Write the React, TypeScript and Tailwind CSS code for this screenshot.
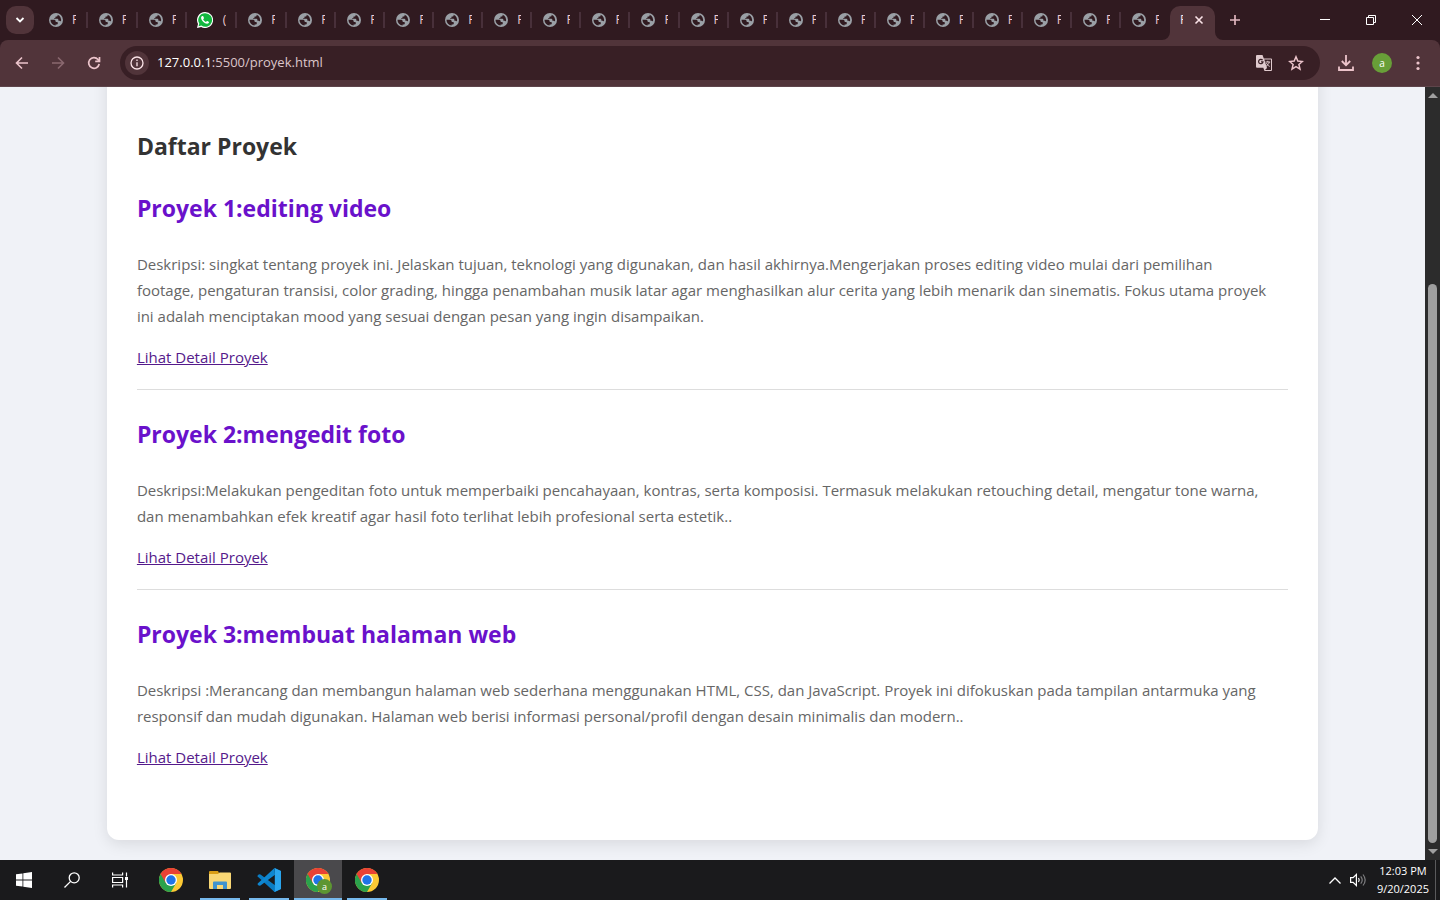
import React from "react";

const visibleTabs = Array.from({ length: 23 }, (_, i) => (i === 3 ? "(" : "P"));

const projects = [
  {
    title: "Proyek 1:editing video",
    lines: [
      "Deskripsi: singkat tentang proyek ini. Jelaskan tujuan, teknologi yang digunakan, dan hasil akhirnya.Mengerjakan proses editing video mulai dari pemilihan",
      "footage, pengaturan transisi, color grading, hingga penambahan musik latar agar menghasilkan alur cerita yang lebih menarik dan sinematis. Fokus utama proyek",
      "ini adalah menciptakan mood yang sesuai dengan pesan yang ingin disampaikan.",
    ],
  },
  {
    title: "Proyek 2:mengedit foto",
    lines: [
      "Deskripsi:Melakukan pengeditan foto untuk memperbaiki pencahayaan, kontras, serta komposisi. Termasuk melakukan retouching detail, mengatur tone warna,",
      "dan menambahkan efek kreatif agar hasil foto terlihat lebih profesional serta estetik..",
    ],
  },
  {
    title: "Proyek 3:membuat halaman web",
    lines: [
      "Deskripsi :Merancang dan membangun halaman web sederhana menggunakan HTML, CSS, dan JavaScript. Proyek ini difokuskan pada tampilan antarmuka yang",
      "responsif dan mudah digunakan. Halaman web berisi informasi personal/profil dengan desain minimalis dan modern..",
    ],
  },
];

function Globe() {
  return (
    <svg viewBox="0 0 14 14" className="h-[14px] w-[14px] shrink-0" aria-hidden="true">
      <circle cx="7" cy="7" r="7" fill="#9aa0a6" />
      <path
        d="M1.500 6.700h3.300c1.200 0 1.900.7 1.900 1.700v.7h1c.8 0 1.100.4 1.100 1v.5c0 .6-.4.9-1 .9H6.600v1.100A5.600 5.600 0 0 1 1.500 7Z"
        fill="#301a20"
      />
      <path
        d="M8.600 1.700v.8c0 .7-.5 1.100-1.100 1.100h-.9v.6c0 .5-.4.7-.8.7h-.6v.8h2.700c1 0 1.500.5 1.500 1.300v.8h1.100c.7 0 1.100.4 1.300.8A5.600 5.600 0 0 0 8.600 1.700Z"
        fill="#301a20"
      />
    </svg>
  );
}

function WhatsApp() {
  return (
    <svg viewBox="0 0 16 16" className="-ml-px h-4 w-4 shrink-0" aria-hidden="true">
      <path d="M8 0a8 8 0 0 0-7 11.900L0 16l4.200-1A8 8 0 1 0 8 0Z" fill="#fff" />
      <path d="M8.100 1.200a6.800 6.800 0 0 0-5.800 10.400l-.7 2.700 2.800-.7A6.800 6.800 0 1 0 8.100 1.200Z" fill="#12b83f" />
      <path
        d="M5.400 4c-.6 0-1.300.8-1.300 1.800 0 2.600 3.400 6 6 6 1.100 0 1.900-.8 1.900-1.700 0-.4-1.700-1.100-2-1.100-.3 0-.8 1-1.100 1C8 9.900 6.200 8.100 6.200 7.300c0-.3.8-.8.8-1.100C7 5.800 6.300 4 5.900 4Z"
        fill="#fff"
      />
    </svg>
  );
}

function Chrome() {
  return (
    <svg viewBox="0 0 24 24" className="h-6 w-6" aria-hidden="true">
      <circle cx="12" cy="12" r="12" fill="#fcc934" />
      <path d="M17.200 15 12 24A12 12 0 0 1 1.600 6L12 12Z" fill="#2ba24c" />
      <path d="M1.600 6A12 12 0 0 1 22.400 6H12L6.800 15Z" fill="#e94235" />
      <circle cx="12" cy="12" r="6" fill="#fff" />
      <circle cx="12" cy="12" r="4.700" fill="#1f74e8" />
    </svg>
  );
}

function Folder() {
  return (
    <svg viewBox="0 0 22 18" className="h-[18px] w-[22px]" aria-hidden="true">
      <path d="M0 1a1 1 0 0 1 1-1h8l1 2h11a1 1 0 0 1 1 1v5H0Z" fill="#d99e16" />
      <path d="M0 3h9l1.500-1.500H21a1 1 0 0 1 1 1V17a1 1 0 0 1-1 1H1a1 1 0 0 1-1-1Z" fill="#f8d775" />
      <path d="M4 18v-6.500a1 1 0 0 1 1-1h12a1 1 0 0 1 1 1V18h-4v-4H8v4Z" fill="#3f93cf" />
    </svg>
  );
}

function VsCode() {
  return (
    <svg viewBox="0 0 24 24" className="h-6 w-6" aria-hidden="true">
      <path d="M17.500 0 24 3v18l-6.500 3L2 9.700.5 8.500.6 7.600 2 6.300l1.500.1L18 17.300Z" fill="#0a7cc4" />
      <path d="M17.500 24 18 6.700 3.500 17.600l-1.500.1-1.400-1.300.1-1L17.500 0l.5 6.700V24Z" fill="#0e86d0" />
      <path d="M17.500 0 24 3v18l-6.500 3 .5-1V1Z" fill="#2aa5ee" />
    </svg>
  );
}

function TabStrip() {
  return (
    <div className="flex h-10 bg-[#301a20]">
      <div className="flex min-w-0 flex-1">
        <button
          type="button"
          aria-label="Search tabs"
          className="mr-1 ml-[6px] flex h-7 w-7 shrink-0 items-center justify-center self-center rounded-[10px] bg-[#51343a]"
        >
          <svg viewBox="0 0 10 10" className="h-[10px] w-[10px]" fill="none" stroke="#fff" strokeWidth="1.800">
            <path d="m1.500 3 3.500 3.500L8.500 3" />
          </svg>
        </button>
        <div className="flex min-w-0 flex-1">
          {visibleTabs.map((label, i) => (
            <button
              key={i}
              type="button"
              className={
                i < 5
                  ? "flex min-w-0 grow-[50] basis-0 items-center pl-[11px] text-[12px] text-[#eccbd1]"
                  : "flex min-w-0 grow-[49] basis-0 items-center pl-[11px] text-[12px] text-[#eccbd1]"
              }
            >
              {i === 3 ? <WhatsApp /> : <Globe />}
              <span className="ml-[9px] w-[4px] shrink-0 overflow-hidden">{label}</span>
              {i < visibleTabs.length - 1 && <span className="ml-auto h-4 w-[2px] shrink-0 bg-[#48303a]" />}
            </button>
          ))}
        </div>
        <div className="flex shrink-0 items-end">
          <svg viewBox="0 0 8 8" className="-ml-2 h-2 w-2" aria-hidden="true">
            <path d="M8 0v8H0a8 8 0 0 0 8-8Z" fill="#51343a" />
          </svg>
          <div className="flex h-[34px] w-[45px] items-center rounded-t-[10px] bg-[#51343a] pb-[6px] pl-[10px] text-[12px] text-[#fbe4e8]">
            <span className="w-[3px] overflow-hidden">P</span>
            <button type="button" aria-label="Close tab" className="ml-[11px]">
              <svg viewBox="0 0 10 10" className="h-[10px] w-[10px]" stroke="#fbe4e8" strokeWidth="1.600">
                <path d="m1.500 1.500 7 7m0-7-7 7" />
              </svg>
            </button>
          </div>
          <svg viewBox="0 0 8 8" className="h-2 w-2" aria-hidden="true">
            <path d="M0 0v8h8a8 8 0 0 1-8-8Z" fill="#51343a" />
          </svg>
          <button type="button" aria-label="New tab" className="ml-[6px] self-center">
            <svg viewBox="0 0 12 12" className="h-3 w-3" stroke="#e0b6be" strokeWidth="1.700">
              <path d="M6 1v10M1 6h10" />
            </svg>
          </button>
        </div>
      </div>
      <div className="ml-[61px] flex shrink-0">
        <button type="button" aria-label="Minimize" className="flex w-[46px] items-center justify-center">
          <svg viewBox="0 0 10 10" className="h-[10px] w-[10px]" stroke="#fff"><path d="M0 4.500h10" /></svg>
        </button>
        <button type="button" aria-label="Restore" className="flex w-[46px] items-center justify-center">
          <svg viewBox="0 0 10 10" className="h-[10px] w-[10px]" fill="none" stroke="#fff">
            <path d="M.5 2.500h7v7h-7zM2.500 2.500v-2h7v7h-2" />
          </svg>
        </button>
        <button type="button" aria-label="Close" className="flex w-[46px] items-center justify-center">
          <svg viewBox="0 0 10 10" className="h-[10px] w-[10px]" stroke="#fff"><path d="m0 0 10 10M10 0 0 10" /></svg>
        </button>
      </div>
    </div>
  );
}

function Toolbar() {
  return (
    <div className="bg-[#301a20]">
      <div className="flex h-[47px] items-center rounded-t-lg border-b border-[#5e454b] bg-[#51343a]">
        <div className="flex w-[120px] shrink-0 items-center pl-1">
          <button type="button" aria-label="Back" className="flex w-9 justify-center">
            <svg viewBox="0 0 16 16" className="h-4 w-4" fill="none" stroke="#ecc4cb" strokeWidth="1.600">
              <path d="M14 8H3M8 2.500 2.500 8 8 13.500" />
            </svg>
          </button>
          <button type="button" aria-label="Forward" disabled className="flex w-9 justify-center">
            <svg viewBox="0 0 16 16" className="h-4 w-4" fill="none" stroke="#8a686f" strokeWidth="1.600">
              <path d="M2 8h11M8 2.500 13.500 8 8 13.500" />
            </svg>
          </button>
          <button type="button" aria-label="Reload" className="flex w-9 justify-center">
            <svg viewBox="0 0 16 16" className="h-4 w-4" fill="none" stroke="#ecc4cb" strokeWidth="1.700">
              <path d="M13.200 9A5.300 5.300 0 1 1 12 4.500l1.200 1.300M13.500 2v4.300H9.200" />
            </svg>
          </button>
        </div>
        <div className="flex h-[34px] min-w-0 flex-1 items-center rounded-full bg-[#381f25] pr-4 pl-[5px]">
          <button type="button" aria-label="Site information" className="flex h-6 w-6 shrink-0 items-center justify-center rounded-full bg-[#51343a]">
            <svg viewBox="0 0 14 14" className="h-[14px] w-[14px]" fill="none" stroke="#fbe4e8" strokeWidth="1.300">
              <circle cx="7" cy="7" r="6" />
              <path d="M7 6.300v4M7 3.600v1.500" />
            </svg>
          </button>
          <div className="ml-2 min-w-0 flex-1 text-[13px] text-[#dcc5ca]">
            <span className="text-white">127.0.0.1</span>:5500/proyek.html
          </div>
          <button type="button" aria-label="Translate this page">
            <svg viewBox="0 0 16 16" className="h-4 w-4" aria-hidden="true">
              <path d="M1 0h5.500l1.300 3.500h7.200a1 1 0 0 1 1 1V15a1 1 0 0 1-1 1H8.500l-1.200-3.300H1a1 1 0 0 1-1-1V1a1 1 0 0 1 1-1Z" fill="#e0cace" />
              <path d="M8.300 4.600 11 13l-2 2h6V4.600Z" fill="#381f25" />
              <path d="M9.500 7h4.700M11.800 5.800V7m1.500 0c-.4 2-2 3.500-3.300 4.300M10.500 8c.5 1.500 1.700 2.700 3.200 3.400" fill="none" stroke="#e0cace" />
              <path d="M6.600 5.200A2.200 2.200 0 1 0 7 6.800H5" fill="none" stroke="#381f25" strokeWidth="1.200" />
            </svg>
          </button>
          <button type="button" aria-label="Bookmark this tab" className="ml-4">
            <svg viewBox="0 0 16 16" className="h-4 w-4" fill="none" stroke="#ecc4cb" strokeWidth="1.500">
              <path d="m8 1.800 1.800 4.300 4.600.4-3.500 3 1.100 4.600L8 11.700l-4 2.400 1.100-4.600-3.500-3 4.600-.4Z" />
            </svg>
          </button>
        </div>
        <div className="flex shrink-0 items-center pr-[18px] pl-[18px]">
          <button type="button" aria-label="Downloads">
            <svg viewBox="0 0 16 16" className="h-4 w-4" fill="none" stroke="#ecc4cb" strokeWidth="1.800">
              <path d="M8 0v9.500M3.800 6 8 10.200 12.200 6M1 11.500V15h14v-3.500" />
            </svg>
          </button>
          <button type="button" aria-label="Profile" className="ml-[18px] flex h-5 w-5 items-center justify-center rounded-full bg-[#689f38] text-[10px] leading-5 text-white">
            a
          </button>
          <button type="button" aria-label="Menu" className="ml-[22px]">
            <svg viewBox="0 0 8 16" className="h-4 w-2" fill="#ecc4cb">
              <circle cx="4" cy="2.500" r="1.600" />
              <circle cx="4" cy="8" r="1.600" />
              <circle cx="4" cy="13.500" r="1.600" />
            </svg>
          </button>
        </div>
      </div>
    </div>
  );
}

function ScrollBar() {
  return (
    <div className="flex w-[15px] shrink-0 flex-col items-center bg-[#2c2c2c] py-[6px]" aria-hidden="true">
      <svg viewBox="0 0 10 5" className="h-[5px] w-[10px]" fill="#9f9f9f"><path d="m0 5 5-5 5 5Z" /></svg>
      <div className="grow-[186]" />
      <div className="w-[9px] grow-[558] rounded-full bg-[#9f9f9f]" />
      <div className="h-[6px]" />
      <svg viewBox="0 0 10 5" className="h-[5px] w-[10px]" fill="#9f9f9f"><path d="m0 0 5 5 5-5Z" /></svg>
    </div>
  );
}

function Page() {
  return (
    <div className="flex-1 overflow-hidden bg-[#f0f2f7] pb-5">
      <main className="mx-auto -mt-8 w-[85%] rounded-xl bg-white px-[30px] pt-[73px] pb-[70px] shadow-[0_4px_15px_rgba(0,0,0,0.1)]">
        <h2 className="text-[23px] leading-9 font-bold text-[#333333]">Daftar Proyek</h2>
        <div className="mt-[26px]">
          {projects.map((project, i) => (
            <section key={project.title} className={i > 0 ? "mt-[19px] border-t border-[#dddddd] pt-[26px]" : ""}>
              <h3 className="text-[23px] leading-9 font-bold text-[#6a11cb]">{project.title}</h3>
              <p className="mt-[25px] text-[15px] leading-[26px] text-[#666666]">
                {project.lines.map((line, n) => (
                  <React.Fragment key={n}>
                    {n > 0 && <br />}
                    {line}
                  </React.Fragment>
                ))}
              </p>
              <a href="#detail" className="mt-4 block w-fit text-[15px] leading-[25px] text-[#551a8b] underline">
                Lihat Detail Proyek
              </a>
            </section>
          ))}
        </div>
      </main>
    </div>
  );
}

function TaskBar() {
  return (
    <footer className="flex h-10 bg-[#1a1a1c] text-white">
      <button type="button" aria-label="Start" className="flex w-12 items-center justify-center">
        <svg viewBox="0 0 16 16" className="h-4 w-4" fill="#fff">
          <path d="M0 2.300 6.500 1.400v6.200H0ZM7.300 1.300 16 0v7.600H7.300ZM0 8.400h6.500v6.200L0 13.700ZM7.300 8.400H16V16l-8.700-1.300Z" />
        </svg>
      </button>
      <button type="button" aria-label="Search" className="flex w-12 items-center justify-center">
        <svg viewBox="0 0 16 16" className="h-4 w-4" fill="none" stroke="#fff" strokeWidth="1.300">
          <circle cx="10.200" cy="5.800" r="5" />
          <path d="M6.600 9.400.5 15.500" />
        </svg>
      </button>
      <button type="button" aria-label="Task view" className="flex w-12 items-center justify-center">
        <svg viewBox="0 0 16 16" className="h-4 w-4" fill="none" stroke="#fff" strokeWidth="1.200">
          <path d="M.6 .5v2.500h10V.5M.6 15.500v-2.500h10v2.500M.6 5.500h10v5H.6ZM14.500 .5v4M14.500 8v7.500" />
          <path d="M13 5h3v3h-3z" fill="#fff" stroke="none" />
        </svg>
      </button>
      <div className="ml-[3px] flex gap-px">
        <button type="button" aria-label="Google Chrome" className="flex w-12 items-center justify-center">
          <Chrome />
        </button>
        <button type="button" aria-label="File Explorer" className="flex w-12 flex-col items-center">
          <span className="flex h-[38px] items-center pt-[2px]"><Folder /></span>
          <span className="h-[2px] w-10 bg-[#76b9ed]" />
        </button>
        <button type="button" aria-label="Visual Studio Code" className="flex w-12 flex-col items-center">
          <span className="flex h-[38px] items-center pt-[2px]"><VsCode /></span>
          <span className="h-[2px] w-10 bg-[#76b9ed]" />
        </button>
        <button type="button" aria-label="Google Chrome, profile a" className="flex w-12 flex-col items-center bg-[#4a494c]">
          <span className="relative flex h-[38px] items-center pt-[2px]">
            <Chrome />
            <span className="absolute right-[-2px] bottom-[4px] flex h-[15px] w-[15px] items-center justify-center rounded-full bg-[#5d9632] text-[9px] leading-none">
              a
            </span>
          </span>
          <span className="h-[2px] w-full bg-[#76b9ed]" />
        </button>
        <button type="button" aria-label="Google Chrome window" className="flex w-12 flex-col items-center">
          <span className="flex h-[38px] items-center pt-[2px]"><Chrome /></span>
          <span className="h-[2px] w-10 bg-[#76b9ed]" />
        </button>
      </div>
      <div className="ml-auto flex items-center">
        <button type="button" aria-label="Show hidden icons">
          <svg viewBox="0 0 12 7" className="h-[7px] w-3" fill="none" stroke="#fff" strokeWidth="1.300">
            <path d="M.5 6.500 6 1l5.500 5.500" />
          </svg>
        </button>
        <button type="button" aria-label="Volume" className="ml-[9px]">
          <svg viewBox="0 0 16 14" className="h-[14px] w-4" fill="none" stroke="#fff" strokeWidth="1.200">
            <path d="M.6 4.600h2.500L6.400 1.500v11L3.100 9.400H.6Z" />
            <path d="M8.500 5c.9 1.200.9 2.800 0 4" />
            <path d="M10.700 3.300c1.900 2.300 1.900 5.100 0 7.400M13 1.500c2.700 3.400 2.700 7.600 0 11" stroke="#7d7d7f" />
          </svg>
        </button>
        <div className="mr-[6px] ml-[11px] text-center text-[11px] leading-[18px]">
          <div>12:03 PM</div>
          <div>9/20/2025</div>
        </div>
        <div className="mr-1 h-full w-px bg-[#5a5a5c]" />
      </div>
    </footer>
  );
}

export default function App() {
  return (
    <div className="flex min-h-screen flex-col font-['Open_Sans',sans-serif]">
      <TabStrip />
      <Toolbar />
      <div className="flex flex-1">
        <Page />
        <ScrollBar />
      </div>
      <TaskBar />
    </div>
  );
}
